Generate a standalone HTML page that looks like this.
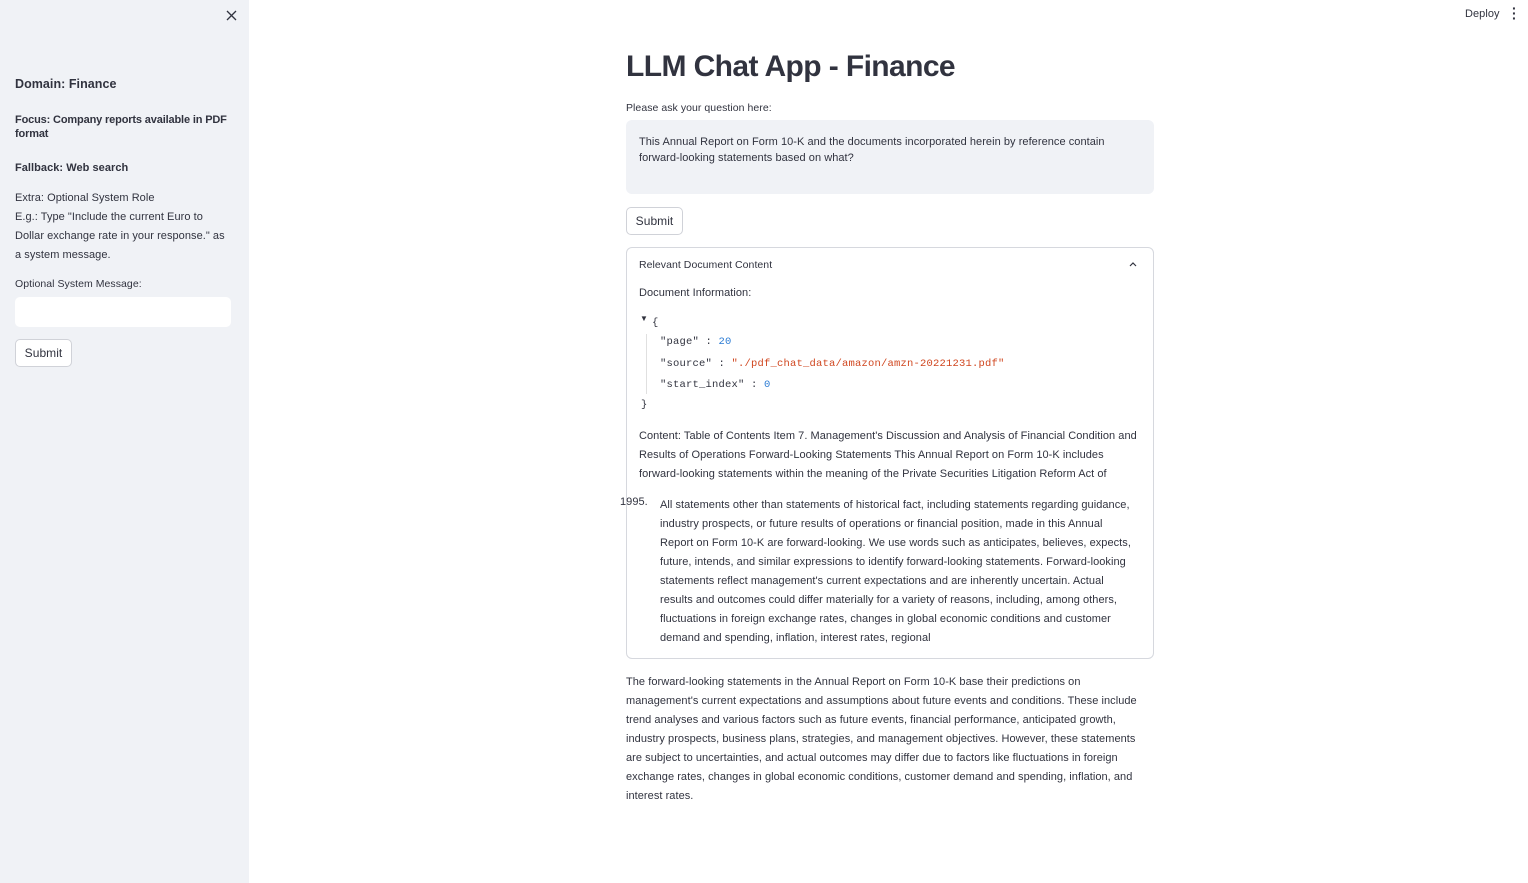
<!DOCTYPE html>
<html><head><meta charset="utf-8"><style>
*{box-sizing:border-box;margin:0;padding:0}
body{width:1528px;height:883px;position:relative;background:#fff;font-family:"Liberation Sans",sans-serif;color:#31333f;overflow:hidden;font-size:11px;letter-spacing:0.05px}
.sb{position:absolute;left:0;top:0;width:249px;height:883px;background:#f0f2f6}
.a{position:absolute;white-space:nowrap}
.b{font-weight:bold}
.mono{font-family:"Liberation Mono",monospace;font-size:10.5px;letter-spacing:0.2px}
.btn{position:absolute;border:1px solid #d0d2d8;border-radius:5px;background:#fff;font-size:12px;display:flex;align-items:center;justify-content:center}
</style></head><body>
<div class="sb">
<svg class="a" style="left:226px;top:10px" width="11" height="11" viewBox="0 0 11 11"><path d="M1 1L10 10M10 1L1 10" stroke="#31333f" stroke-width="1.3"/></svg>
<div class="a b" style="left:15px;top:77px;font-size:12.5px">Domain: Finance</div>
<div class="a b" style="left:15px;top:113px;line-height:14px;letter-spacing:-0.15px">Focus: Company reports available in PDF<br>format</div>
<div class="a b" style="left:15px;top:162px">Fallback: Web search</div>
<div class="a" style="left:15px;top:189px;line-height:19px">Extra: Optional System Role<br>E.g.: Type "Include the current Euro to<br>Dollar exchange rate in your response." as<br>a system message.</div>
<div class="a" style="left:15px;top:278px;font-size:10.5px">Optional System Message:</div>
<div class="a" style="left:15px;top:297px;width:216px;height:30px;background:#fff;border-radius:5px"></div>
<div class="btn" style="left:15px;top:339px;width:57px;height:28px">Submit</div>
</div>
<div class="a" style="left:1465px;top:8px;font-size:11px">Deploy</div>
<div class="a" style="left:1512px;top:6px;font-size:14px;font-weight:bold;line-height:5px">·<br>·<br>·</div>
<div class="a b" style="left:626px;top:50px;font-size:30px;letter-spacing:-0.6px">LLM Chat App - Finance</div>
<div class="a" style="left:626px;top:102px;font-size:10.5px">Please ask your question here:</div>
<div class="a" style="left:626px;top:120px;width:528px;height:74px;background:#f0f2f6;border-radius:6px"></div>
<div class="a" style="left:639px;top:134px;line-height:16px">This Annual Report on Form 10-K and the documents incorporated herein by reference contain<br>forward-looking statements based on what?</div>
<div class="btn" style="left:626px;top:207px;width:57px;height:28px">Submit</div>
<div class="a" style="left:626px;top:247px;width:528px;height:412px;border:1px solid #d6d8de;border-radius:6px"></div>
<div class="a" style="left:639px;top:259px;font-size:10.5px">Relevant Document Content</div>
<svg class="a" style="left:1129px;top:262px" width="8" height="5" viewBox="0 0 8 5"><path d="M1 4L4 1L7 4" stroke="#31333f" stroke-width="1.2" fill="none"/></svg>
<div class="a" style="left:639px;top:287px">Document Information:</div>
<div class="a" style="left:640px;top:314px;font-size:8px">▼</div>
<div class="a mono" style="left:652px;top:317px">{</div>
<div class="a" style="left:646px;top:334px;width:1px;height:60px;background:#e0e0e0"></div>
<div class="a mono" style="left:660px;top:336px">"page" : <span style="color:#2a7bd4">20</span></div>
<div class="a mono" style="left:660px;top:358px">"source" : <span style="color:#d0461f">"./pdf_chat_data/amazon/amzn-20221231.pdf"</span></div>
<div class="a mono" style="left:660px;top:379px">"start_index" : <span style="color:#2a7bd4">0</span></div>
<div class="a mono" style="left:641px;top:399px">}</div>
<div class="a" style="left:639px;top:427px;line-height:19px">Content: Table of Contents Item 7. Management's Discussion and Analysis of Financial Condition and<br>Results of Operations Forward-Looking Statements This Annual Report on Form 10-K includes<br>forward-looking statements within the meaning of the Private Securities Litigation Reform Act of</div>
<div class="a" style="left:620px;top:496px">1995.</div>
<div class="a" style="left:660px;top:496px;line-height:19px">All statements other than statements of historical fact, including statements regarding guidance,<br>industry prospects, or future results of operations or financial position, made in this Annual<br>Report on Form 10-K are forward-looking. We use words such as anticipates, believes, expects,<br>future, intends, and similar expressions to identify forward-looking statements. Forward-looking<br>statements reflect management's current expectations and are inherently uncertain. Actual<br>results and outcomes could differ materially for a variety of reasons, including, among others,<br>fluctuations in foreign exchange rates, changes in global economic conditions and customer<br>demand and spending, inflation, interest rates, regional</div>
<div class="a" style="left:626px;top:673px;line-height:19px">The forward-looking statements in the Annual Report on Form 10-K base their predictions on<br>management's current expectations and assumptions about future events and conditions. These include<br>trend analyses and various factors such as future events, financial performance, anticipated growth,<br>industry prospects, business plans, strategies, and management objectives. However, these statements<br>are subject to uncertainties, and actual outcomes may differ due to factors like fluctuations in foreign<br>exchange rates, changes in global economic conditions, customer demand and spending, inflation, and<br>interest rates.</div>
</body></html>
